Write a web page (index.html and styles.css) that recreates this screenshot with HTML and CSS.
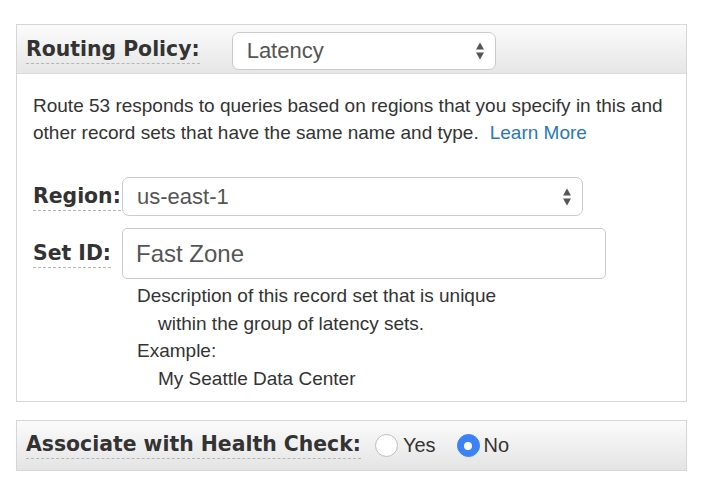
FILE: index.html
```html
<!DOCTYPE html>
<html>
<head>
<meta charset="utf-8">
<link rel="stylesheet" href="styles.css">
</head>
<body>
<div class="page">
  <section class="panel">
    <div class="panel-head">
      <span class="label">Routing Policy:</span>
      <div class="select select-policy">
        <span class="select-value">Latency</span>
        <span class="arrows"><i class="up"></i><i class="down"></i></span>
      </div>
    </div>
    <div class="panel-body">
      <div class="intro">
        <div>Route 53 responds to queries based on regions that you specify in this and</div>
        <div class="intro-last"><span>other record sets that have the same name and type.</span><a class="link" href="#">Learn More</a></div>
      </div>
      <div class="field field-region">
        <div class="field-name"><span class="label">Region:</span></div>
        <div class="select select-region">
          <span class="select-value">us-east-1</span>
          <span class="arrows"><i class="up"></i><i class="down"></i></span>
        </div>
      </div>
      <div class="field field-setid">
        <div class="field-name"><span class="label">Set ID:</span></div>
        <div class="input">Fast Zone</div>
      </div>
      <div class="help">
        <div>Description of this record set that is unique</div>
        <div class="indent">within the group of latency sets.</div>
        <div>Example:</div>
        <div class="indent">My Seattle Data Center</div>
      </div>
    </div>
  </section>
  <section class="panel panel-health">
    <span class="label">Associate with Health Check:</span>
    <span class="radio"></span><span class="radio-text">Yes</span>
    <span class="radio radio-on"></span><span class="radio-text">No</span>
  </section>
</div>
</body>
</html>
```
FILE: styles.css
```css
html, body {
  margin: 0;
  padding: 0;
  background: #fff;
}
.page {
  padding: 24px 0 0 16px;
  width: 671px;
  font-family: "Liberation Sans", Arial, sans-serif;
  color: #333;
}
.panel {
  border: 1px solid #d6d6d6;
  box-sizing: border-box;
  width: 671px;
}
.panel-head {
  height: 44px;
  padding-top: 4px;
  display: flex;
  align-items: center;
  gap: 32px;
  padding-left: 9px;
  background: linear-gradient(#fbfbfb, #e6e6e6);
  border-bottom: 1px solid #dcdcdc;
}
.label {
  font-family: "DejaVu Sans", Verdana, sans-serif;
  font-weight: bold;
  font-size: 20.4px;
  color: #333;
  border-bottom: 1px dashed #b5b5b5;
  padding-bottom: 2px;
  line-height: 23px;
}
.select {
  position: relative;
  box-sizing: border-box;
  background: #fff;
  border: 1px solid #cbcbcb;
  border-radius: 7px;
  display: flex;
  align-items: center;
  color: #555;
  font-size: 22px;
}
.select-policy {
  width: 264px;
  height: 38px;
  padding-left: 14px;
}
.select-region {
  width: 461px;
  height: 39px;
  padding-left: 14px;
}
.arrows {
  position: absolute;
  right: 11px;
  top: 50%;
  transform: translateY(-50%);
  display: flex;
  flex-direction: column;
  gap: 3px;
}
.arrows i {
  display: block;
  width: 0;
  height: 0;
  border-left: 4.5px solid transparent;
  border-right: 4.5px solid transparent;
}
.arrows .up { border-bottom: 7px solid #555; }
.arrows .down { border-top: 7px solid #555; }
.panel-body {
  padding: 18px 16px 9px 16px;
}
.intro {
  font-size: 19px;
  line-height: 27px;
  color: #333;
  white-space: nowrap;
}
.link {
  margin-left: 11px;
  color: #2a78b5;
  text-decoration: none;
}
.field {
  display: flex;
  align-items: center;
}
.field-name {
  width: 89px;
  flex: none;
}
.field-region {
  margin-top: 31px;
}
.field-setid {
  margin-top: 12px;
}
.input {
  box-sizing: border-box;
  width: 484px;
  height: 51px;
  border: 1px solid #cbcbcb;
  border-radius: 5px;
  padding-left: 13px;
  display: flex;
  align-items: center;
  font-size: 24px;
  color: #555;
}
.help {
  margin: 3px 0 0 104px;
  font-size: 19px;
  line-height: 27.5px;
  color: #333;
}
.indent {
  padding-left: 21px;
}
.panel-health {
  margin-top: 18px;
  height: 51px;
  display: flex;
  align-items: center;
  padding-left: 9px;
  background: linear-gradient(#fbfbfb, #e4e4e4);
  box-shadow: 0 1px 1px rgba(0,0,0,0.06);
}
.radio {
  box-sizing: border-box;
  width: 23px;
  height: 23px;
  border-radius: 50%;
  border: 1px solid #bdbdbd;
  background: #fff;
  margin-left: 14px;
  margin-right: 5px;
  position: relative;
}
.radio-on {
  margin-left: 21px;
  margin-right: 4px;
  border-color: #3b82f6;
  background: #3b82f6;
}
.radio-on::after {
  content: "";
  position: absolute;
  left: 50%;
  top: 50%;
  width: 8px;
  height: 8px;
  margin: -4px 0 0 -4px;
  border-radius: 50%;
  background: #fff;
}
.radio-text {
  font-size: 20px;
  color: #333;
}
```
